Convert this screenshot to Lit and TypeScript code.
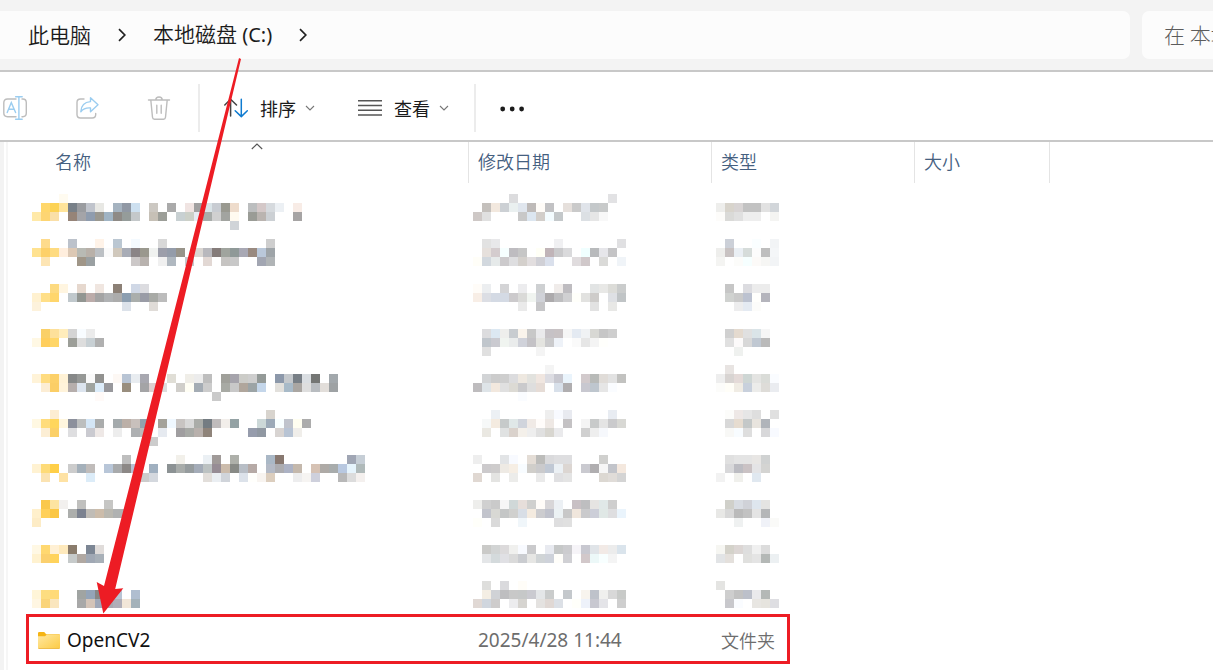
import { LitElement, html, svg, css } from "lit";
import { customElement, property } from "lit/decorators.js";

const BLOCK = 9;

/** One line of blocks: colours separated by blanks, "." skips a block, "n:" jumps to block n. */
type Line = string;

interface HiddenRow {
  name: Line[];
  date: Line[];
  type: Line[];
  lines: number;
}

const HIDDEN_ROWS: HiddenRow[] = [
  {
    lines: 5,
    name: [
      "3:fffbf0",
      "1:ffd76b fcd254 ffe49a 788088 9a9ca0 c0c4cc e8e8e4 . a5b3c0 9098a4 cde0f0 . ccc8c2 . aaaaaa . f0e4e2 a0a0a0 dae4e8 c8ccd2 999990 eedccc . bcbebf d4c8c8 d6dade ecf0f4 . f8ece6",
      "ffe9a8 fdd573 fadfa8 . 968478 a4a4a8 8f9cae 9a9890 a0b4c4 8e8a86 959c9a c4c8ca . c6c0b6 9c9e98 . c8d0d2 ccd0c8 e8ecf4 a8acaa d0d0d0 a2a4a0 fffaf0 . 9a9c96 bab4b0 ccd0d4 . . a6a4a4",
      "22:d0d4d8",
    ],
    date: [
      "4:dcdcde 15:e2e2e4",
      "1:c4c0bc f2e8de ccd0d4 eaf0f0 e0e6ee bebab8 fffcf8 c2c2c4 . e6e0dc cacaca e0e4ea c4c8ca c8caca",
      "cec8c6 e0e0e0 5:c8c8c8 dce6f0 d2ceca f4fcff c4c8ca 12:dce0e4 e6e6e6 f8f8f8",
    ],
    type: [
      "",
      "eeeeec d8d4cc d8d4d4 c2c2c2 c2c2c2 e2e2e2 d2d6da",
      "fdfcfa dadad8 e0e0e0 eeeeee eeeeee . f4f4f2",
    ],
  },
  {
    lines: 5,
    name: [
      "1:fedb8c 4:bcc2cb 7:fff3e8 9:bbc7d2 11:f4faff 14:d8d8d8 26:cecece",
      "ffe290 fdd068 fedb80 ffeedd dcc8b4 b8bab4 b8b0a8 bcc0c4 fafafa d0c8bc a8acb6 8a8486 9a988e f0f2f0 9c9eaa 949caa 98948a . dad6d2 b8b8bd 857c7a a0a49e 8f9998 a8a8b4 998a80 bac8da 9ea4a8",
      "1:fde5b4 5:a09688 9aa0a2 11:ccc8c8 b8b2ae . f0f0f0 b0b8c0 . c8c8cc . e2d8d4 . c6c4c2 c8c8c8 . . a2a6b2 b0b4b6",
    ],
    date: [
      "1:e2e2e2 e8e8ea 9:f0f0f2 16:e0e0e2",
      "1:e6e0dc d4ccce f6ffff bebcc0 c6c6c6 . fffff6 c0b4b8 cacacc dadadc . f0ffff b8babc e6e6ea c4c4c6",
      "fffef8 d2d8de e6eaea cccacc dedee0 d4d0cc e2dedf d0d0d6 dae0ec . . e0dcde d0c8ca . dadad8 . f0f4f8",
    ],
    type: [
      "1:ccd0d8 4:fafeff 6:f2f4f6",
      "eeeeec c8c2c2 eaeff4 d6dcda fcfcfc bebebe f4f6f8",
      "f4f4f2 . fcfcfa f6ffff fcfaf8 f6f6f4 f2f4f6",
    ],
  },
  {
    lines: 5,
    name: [
      "2:fdda80 fff5e0 . e6d8ce . f0e6e0 . 8c8076 . d0d8e6 dcdce0",
      "fff1d0 ffdf88 ffd66c . c0c8cc 929692 bcacaa a4a4a4 b0b2b4 acacac 8c9eb0 aaaeac 9a9ca6 a8aaa6 bcbcbc",
      "fdf2dc 10:dce2ea 13:e0dcd8",
    ],
    date: [
      "fffcf8 eceef0 . d4d4d6 . ececee . ced0d2 . f0ecea bebcc0 13:e2e4e4 e8e8e6 dcdcd8 cacccc",
      "f8eee6 dcdee4 d4dae4 d4dae4 cccacc dadad8 f0f4f0 d0d2d8 acaaac bebec0 d0d0d2 fffffa e2e2e0 ceccca . dee0e4 c0c4c6",
      "5:eaeaea . c6c6c8 13:e2e2e2 . e8e8e6",
    ],
    type: [
      "1:c6c6c6 . dcdce0 ececec ececec",
      "1:d0d2d0 cacaca bcc2d0 fffffc b4b4bc",
      "2:ededee e4eaf2 fcfcfa",
    ],
  },
  {
    lines: 4,
    name: [
      "1:fad068 fde09a ffedbc d4d4d4 f8fcff ebebeb",
      "fff8e4 ffce5c ffd668 . 9c9e98 dddddd c8d0d4 b0b0b0",
    ],
    date: [
      "1:dcdcde dce8f2 eeeeec c8ccd0 faf4ec c8c8c8 eaeaec c6c2c6 c8c2c4 f6f6f6 e4eaf2 f0f2f4 d8d8d4 c6c6c6 cecece",
      "1:c0c6cc cacad0 f0f4f0 eaecec d0d2da c4c2c6 e4e4e0 cacacc eef2f8 . fafafa e6e6e6 f4f4f4 fffffc",
      "1:e0e0e0 7:f4f4f4",
    ],
    type: [
      "1:d0d0d0 e4dacf e0e0e0 dae4e8 f6f6f6",
      "1:e0e0e0 fcfafa d8d8d8 c0c8d2 bababa",
      "2:eff1ef",
    ],
  },
  {
    lines: 5,
    name: [
      "",
      "fff3d8 ffdc80 fcd068 fff2d6 868888 969896 fafafa 929290 . fdf8f4 b8c4d4 e8ecf0 a8a8b0 15:e0ded6 . f0eee8 ececec bebebe . a0a09a a6a4ac ccccc8 cecece 949a98 . 8c98aa c4c8cc 787f86 dadee2 747674 . a2a8ac",
      "1:fcedd4 fbce66 fff3da b6aeac dce4ee a0a4a0 dcecfa 98989c . 998e7e . a4a4a6 ddd0d0 dddddd . d0ceca fffef4 a4acb4 cccccc . a8aaa4 c8c8c8 b0a69c 9ca4a6 c4d6ea . e2e0dc a8bac8 aaa6a2 dedede b8bcc0 e2deda 9ea2a4",
      "7:fffaf8 20:cacaca",
    ],
    date: [
      "8:f4f4f4",
      "1:d2d4d6 cccccc cecece dcdcde eee8e0 e2e2de f0e6e0 dcdce2 c8c8d0 eaf4fc . d2cacc b8bab8 e0dcd8 e2e2e2 c2c2c0",
      "bebcbe dee4e8 f2e8de e0e0e0 dcdad4 cacacc dedede e6dcd6 . d8e0ea b0aeb0 . c8c8d0 bec6ce e6e6e6 fafcff",
      "5:fafcff",
    ],
    type: [
      "1:e8e4e2",
      "eeeeee d8d4d2 e4dad8 ced6d4 e4e4e2 dadcd8 fafcff",
      "fcfcfa fffef8 f0ece4 c8d0dc ececea dedcd8 eaecf0",
    ],
  },
  {
    lines: 5,
    name: [
      "2:fdedd2 26:d8d4ce",
      "fff8e2 ffdc7c ffd65c fff6de 8c909c bcbebe d4e6f6 aaacac . a4aaac bcb0a8 c8c0bc 92a2ae . a4a29a f0f8ff c8c4c2 d8d8d8 aaaca8 747c82 c0bcbc f2eeea 94a2a4 . . ccd8d8 9caab8 f8ffff c0c4cc fffef0 acacac",
      "1:fceed4 fbd068 . dedee0 . cacad0 eee8e6 . ededed . aeb0b2 bbbbbb . e6eaf0 . a09ea0 a8aaa6 b8b0ac 8f847a 24:969cac 9098a2 . d8d4d2 b8c4d4 f0eeea",
      "13:cccccc",
    ],
    date: [
      "2:ecf0f4 8:eeeeee f8faff e8eaf0 15:e8ecf2",
      "1:f6f8f8 f4ebe0 c6caca e0e8e8 d0d4dc f0eae6 fffcfa eee8e4 . c4c2c4 . f4f4f4 c8caca e4e4e4 cacacc d8d8d4",
      "1:eae8e2 . e0e2e2 dad2cc f4f0ea eeeeee e0e0e0 d8d6d0 eaeaec 12:d0d0d0 eeeeee f6f8fc",
    ],
    type: [
      "1:fcfcfa eee8e6 e6e6e6 dedede . e0e0e0",
      "1:d8d8d8 e6dcd0 c4c8c8 e8e4de b0b4ba",
      "1:f8f8f6 f8fcff dedede . d8d8da f8faff",
    ],
  },
  {
    lines: 5,
    name: [
      "10:bebebe 16:f2f0ea 19:ebf0f4 a09a98 . aeb0aa 26:aab8c6 887870 35:a0a6b4 c6ced6",
      "fff2d2 fedb78 ffcf48 . cccccc a4b0ba c0bcba . b8c6d8 a8aaac 8c8886 b8c0d4 . a0b0c0 . 8c9294 a8acaa 969c9e a4acb8 bcc2c2 968c94 ccbcac 888a86 b8bec6 b6aaa6 . b4bac6 acacb0 acb2c4 c4b8ac . d6c2b4 aeaaa6 a8acac b8c8e0 e6f4fc b0baba",
      "1:fbe3b2 . fee2a4 6:dcecf8 12:cccccc d4d8de 19:e2deda eaeef2 d0d4da . dce2ea fffffc f8f4f0 dccebe . . ededee f6f4f2 ced0dc . . b8b8b8 dcdcdc f4f0ee",
    ],
    date: [
      "eeeeee . . e2e4e6 f8faff . e4ddd6 bcbcba dadadc dedee0 dedee0 14:d0d0ce",
      "1:cccacc cecccc eeeae4 f6eee4 f8fcff d0ceca cacacc c0c8d4 ebf0f4 dcd6d2 . cacad0 b0aeb0 f6f6f6 c2c4ca f4e8de",
      "e0d8d2 . e4e4e2 . ececea 7:eaeaea . e0e0e2 e4e4e4 14:dcd8d2 e0dcd8 d4d4d4",
    ],
    type: [
      "1:e0e0e0 e4e4e4 e4e4e4 e8e6e4 d0d2d2",
      "1:d8d8da bcbcc2 cac2c4 e4e4e6 d4d4d2",
      "f2f2f2 . f0f0ec . e0e8f0",
    ],
  },
  {
    lines: 5,
    name: [
      "1:fac84c fde4a0 f2f0ee . c0c0be . . c6c6c4",
      "fff0cc ffd05a fbc744 . acaeac 7c8290 c0bcb6 ccbcaa bab8b0 b0b2b2 b0b2b2",
      "fdecc6",
    ],
    date: [
      "eeeeec d0d0d0 cacaca f6f6f6 d0d8d8 e6deda d0d0ce fffcf8 d8d6d8 ecf0f4 . c8c0c4 bebec0 e6e4e2 e0e8e8 cecece",
      "1:c2c4cc d8d8d4 c4c6c6 d0d0ce d8dee6 f4ebe0 cccccf c0c2cc ecf2f4 c8c8c8 f0e6dc cacacc ccced8 e0e8e6 dedee0 eaf4fc",
      "fffffa . dadada . . f0f6fa 9:dededf e0e0e0",
    ],
    type: [
      "1:d0d0ca d8dce2 d0d2d8 dee6ee e4e4e2",
      "e8e8e6 d8d8d8 bababa c2c2c2 e4e4e4 b4b6b8",
      "2:eff1f1 5:f0f2f8 fafaf8",
    ],
  },
  {
    lines: 4,
    name: [
      "fff8e4 ffd870 fff0d4 fee9bc 8a7c6c . 7c8694 e0dcda",
      "fff2d0 fbd06e ffd35c . c6caca b0a8a2 a0a8b4 a8b0b8",
    ],
    date: [
      "1:cacac8 d2d4d4 dcdadb f0f0ee f8faff cacacc . e8eaf0 c6c8c8 cccccf f6f4f8 c8c8d0 e0e4e8 f2eae6 ececec dae4ec",
      "1:e4e6e8 d4dadc e0e0e4 dadada caccd0 e6e6e4 d0d4d6 ced2da fffefa d0d0d4 . d2c8ca ecf8f8 f8ffff f4f4f4",
    ],
    type: [
      "f6f6f2 d4d2ca dcd6d4 dedede f0f0f0 dcdcdc",
      "e2e4e6 e4e0dc . e0e0de e4e4e4 b4b8b6 ecf0f2",
    ],
  },
  {
    lines: 4,
    name: [
      "",
      "fff5d8 fddd80 ffda78 . . a0a4a2 94a4b8 888684 9a9ca0 b8c4d4 . b0bed0",
      "fff6e2 fad478 fae6be . . a8a8a8 d4c4b8 a0a8b8 a8a8b0 b0aeb8 f2e6d8 a4b2ba",
    ],
    date: [
      "1:dededc . dadadd . fffdf8",
      "1:f4eee4 d0d2d6 bebec0 c8c8c8 c6c8c8 cacad0 e4e6e8 cacccc . c4c8cc . f8f4ee bec2ca f0f0ee d8d8d8 c8cac8",
      "e0d8d4 d0d6de cecccc . ececee d6d4d0 . e4e2e0 e0d8d4 dce0e6 . fffffa eef2fa c8c8d0 e4e4e8 . cecece",
    ],
    type: [
      "e4e4e2",
      "1:cecece c2c2c2 bcc0ca eaeaec b4b8b6",
      "1:c8c8cc fafcff . e8e6e2 e6e4de dedee2",
    ],
  },
];

/** Text made unreadable by coarse blocks. */
@customElement("mosaic-text")
export class MosaicText extends LitElement {
  @property({ attribute: false }) lines: Line[] = [];
  @property({ type: Number }) rows = 5;

  static styles = css`
    :host {
      display: block;
    }
    .blocks {
      display: block;
    }
  `;

  private blocks() {
    const out: { x: number; y: number; fill: string }[] = [];
    this.lines.forEach((line, y) => {
      let x = 0;
      for (let token of line.split(" ")) {
        if (!token) continue;
        const jump = token.indexOf(":");
        if (jump > 0) {
          x = Number(token.slice(0, jump));
          token = token.slice(jump + 1);
        }
        if (token !== ".") out.push({ x, y, fill: "#" + token });
        x += 1;
      }
    });
    return out;
  }

  render() {
    const blocks = this.blocks();
    const columns = Math.max(1, ...blocks.map((b) => b.x + 1));
    return html`<svg
      class="blocks"
      width=${columns * BLOCK}
      height=${this.rows * BLOCK}
      viewBox="0 0 ${columns} ${this.rows}"
      shape-rendering="crispEdges"
      aria-hidden="true"
    >
      ${blocks.map((b) => svg`<rect x=${b.x} y=${b.y} width="1" height="1" fill=${b.fill}></rect>`)}
    </svg>`;
  }
}

const crumbArrow = html`<svg width="8" height="14" viewBox="0 0 8 14" fill="none" stroke="#222" stroke-width="1.7" aria-hidden="true">
  <path d="M1 1.2 6.8 7 1 12.8" />
</svg>`;

const dropArrow = html`<svg width="12" height="8" viewBox="0 0 12 8" fill="none" stroke="#777" stroke-width="1.1" aria-hidden="true">
  <path d="M2 2l4 4 4-4" />
</svg>`;

@customElement("app-root")
export class AppRoot extends LitElement {
  static styles = css`
    :host {
      display: block;
      position: relative;
      min-height: 100vh;
      overflow: hidden;
      background: #fff;
      color: #1b1b1b;
      font-family: "Noto Sans", "Noto Sans CJK SC", sans-serif;
      font-size: 18px;
      line-height: 24px;
    }
    * {
      box-sizing: border-box;
    }
    button,
    input {
      font: inherit;
      color: inherit;
      border: 0;
      margin: 0;
      padding: 0;
      background: none;
    }
    svg {
      display: block;
      flex: none;
    }
    .top {
      display: flex;
      gap: 12px;
      padding: 11px 0;
      background: #f3f3f3;
      border-bottom: 2px solid #c8c8c8;
      font-family: "Noto Sans CJK SC", sans-serif;
      font-size: 21px;
    }
    .address {
      flex: 1;
      min-width: 0;
      display: flex;
      align-items: center;
      gap: 27px;
      height: 48px;
      padding-left: 28px;
      background: #fcfcfc;
      border-radius: 0 7px 7px 0;
    }
    .crumb {
      padding-bottom: 2px;
      white-space: nowrap;
      font-weight: 350;
    }
    .latin {
      font-family: "Noto Sans", sans-serif;
      font-size: 20px;
      font-weight: 400;
    }
    .search {
      flex: 0 0 71px;
      width: 71px;
      height: 48px;
      padding: 0 0 2px 22px;
      background: #fcfcfc;
      border-radius: 7px 0 0 7px;
      font-weight: 300;
    }
    .search::placeholder {
      color: #5c5c5c;
      opacity: 1;
    }
    .tools {
      display: flex;
      align-items: center;
      gap: 24px;
      height: 70px;
      padding: 4px 0 0 3px;
      border-bottom: 2px solid #c8c8c8;
    }
    .group {
      display: flex;
      align-items: center;
      gap: 42px;
    }
    .group.icons {
      gap: 48px;
      padding-right: 3px;
    }
    .tool {
      display: flex;
      align-items: center;
      white-space: nowrap;
    }
    .word {
      padding: 0 8px 0 12px;
      font-family: "Noto Sans CJK SC", sans-serif;
    }
    .bar {
      width: 2px;
      height: 48px;
      background: #ececec;
    }
    .files {
      display: flex;
      align-items: flex-start;
      min-height: calc(100vh - 142px);
      border-left: 4px solid #f3f3f3;
    }
    .edge {
      align-self: stretch;
      width: 4px;
      border-right: 2px solid #f6f6f6;
    }
    .list {
      table-layout: fixed;
      width: 1042px;
      border-collapse: collapse;
    }
    .c-name {
      width: 461px;
    }
    .c-date {
      width: 243px;
    }
    .c-type {
      width: 203px;
    }
    .c-size {
      width: 135px;
    }
    th {
      position: relative;
      padding: 0 0 11px;
      text-align: left;
      font-weight: 350;
      color: #45607f;
      font-family: "Noto Sans CJK SC", sans-serif;
    }
    .head {
      display: block;
      width: 100%;
      height: 41px;
      padding: 0 0 3px 9px;
      text-align: left;
      border-right: 1px solid #e4e4e4;
    }
    .head.first {
      padding-left: 47px;
    }
    .caret {
      position: absolute;
      top: 0;
      left: 243px;
    }
    td {
      padding: 0 0 0 4px;
      vertical-align: top;
    }
    td:first-child {
      padding-left: 24px;
    }
    .entry td {
      height: 46px;
      padding-left: 9px;
      vertical-align: middle;
      font-size: 19px;
      color: #6d6d6d;
    }
    .entry td:first-child {
      padding-left: 29px;
      color: #111;
    }
    .entry .kind {
      font-family: "Noto Sans CJK SC", sans-serif;
      font-size: 18px;
      font-weight: 350;
    }
    .file {
      display: flex;
      align-items: center;
      gap: 6px;
      color: inherit;
      text-decoration: none;
    }
    .marks {
      position: absolute;
      top: 0;
      left: 0;
      pointer-events: none;
    }
  `;

  render() {
    return html`
      <header class="top">
        <nav class="address" aria-label="地址">
          <button class="crumb">此电脑</button>
          ${crumbArrow}
          <button class="crumb">本地磁盘<span class="latin"> (C:)</span></button>
          ${crumbArrow}
        </nav>
        <input class="search" type="text" aria-label="搜索" placeholder="在 本地磁盘 (C:) 中搜索" />
      </header>

      <div class="tools" role="toolbar">
        <div class="group icons">
          <button class="tool" aria-label="重命名">
            <svg width="24" height="24" viewBox="0 0 24 24" fill="none" stroke-width="1.4" stroke-linecap="round">
              <path stroke="#bdbdbd" d="M13 3H4.500Q.8 3 .8 6.700v10.300Q.8 20.700 4.500 20.700H13M19 3h.8Q23.300 3 23.300 6.700v10.300q0 3.700-3.500 3.700H19" />
              <path stroke="#9bcdf0" d="M12.600.8h6.600M15.900.8v22.400M12.600 23.200h6.600" />
              <path stroke="#9bcdf0" d="M4.200 16.500 8.300 6.600l4.300 9.900M5.700 13.300h5.400" />
            </svg>
          </button>
          <button class="tool" aria-label="共享">
            <svg width="24" height="24" viewBox="0 0 24 24" fill="none" stroke-width="1.4" stroke-linecap="round" stroke-linejoin="round">
              <path stroke="#bdbdbd" d="M9 3H5.500Q2 3 2 6.500v12Q2 22 5.500 22h11.700q3.500 0 3.500-3.500V17.500" />
              <path stroke="#9bcdf0" d="M15.500 1.700 23 8.800l-7.500 7v-3.900c-4-.3-7.300.7-9.700 3.800.3-5.800 3.400-9.600 9.700-10.100z" />
            </svg>
          </button>
          <button class="tool" aria-label="删除">
            <svg width="24" height="24" viewBox="0 0 24 24" fill="none" stroke="#bdbdbd" stroke-width="1.4" stroke-linecap="round" stroke-linejoin="round">
              <path d="M1.500 4h21M8.800 4c0-4 6.400-4 6.400 0M3.800 4l1.700 17.300q.2 1.900 2 1.900h9q1.800 0 2-1.900L20.200 4M9.800 9.300v8M14.200 9.300v8" />
            </svg>
          </button>
        </div>
        <div class="bar"></div>
        <div class="group">
          <button class="tool">
            <svg width="24" height="24" viewBox="0 0 24 24" fill="none" stroke-width="1.5" stroke-linecap="round" stroke-linejoin="round" aria-hidden="true">
              <path stroke="#444" d="M6.600 20V3.200M.8 9l5.800-5.800L12.500 9" />
              <path stroke="#0f7bd0" d="M17.300 3.200V20.500M11.200 14.700l6.100 5.900 6-5.900" />
            </svg>
            <span class="word">排序</span>
            ${dropArrow}
          </button>
          <button class="tool">
            <svg width="24" height="24" viewBox="0 0 24 24" stroke="#555" stroke-width="1.500" aria-hidden="true">
              <path d="M0 4.800h24M0 9.500h24M0 14.300h24M0 19h24" />
            </svg>
            <span class="word">查看</span>
            ${dropArrow}
          </button>
        </div>
        <div class="bar"></div>
        <button class="tool" aria-label="更多">
          <svg width="25" height="24" viewBox="0 0 25 24" fill="#1b1b1b">
            <circle cx="2.700" cy="13" r="2.400" />
            <circle cx="12.200" cy="13" r="2.400" />
            <circle cx="21.600" cy="13" r="2.400" />
          </svg>
        </button>
      </div>

      <main class="files">
        <div class="edge"></div>
        <table class="list">
          <colgroup>
            <col class="c-name" />
            <col class="c-date" />
            <col class="c-type" />
            <col class="c-size" />
          </colgroup>
          <thead>
            <tr>
              <th scope="col">
                <button class="head first">名称</button>
                <svg class="caret" width="12" height="8" viewBox="0 0 12 8" fill="none" stroke="#555" stroke-width="1.1" aria-hidden="true">
                  <path d="M.8 7 6 2l5.200 5" />
                </svg>
              </th>
              <th scope="col"><button class="head">修改日期</button></th>
              <th scope="col"><button class="head">类型</button></th>
              <th scope="col"><button class="head">大小</button></th>
            </tr>
          </thead>
          <tbody>
            ${HIDDEN_ROWS.map(
              (row) => html`<tr>
                <td><mosaic-text .lines=${row.name} .rows=${row.lines}></mosaic-text></td>
                <td><mosaic-text .lines=${row.date} .rows=${row.lines}></mosaic-text></td>
                <td><mosaic-text .lines=${row.type} .rows=${row.lines}></mosaic-text></td>
                <td></td>
              </tr>`
            )}
            <tr class="entry">
              <td>
                <a class="file" href="#OpenCV2">
                  <svg width="24" height="20" viewBox="0 0 24 20" aria-hidden="true">
                    <defs>
                      <linearGradient id="paper" x1="0" y1="0" x2="1" y2="1">
                        <stop offset="0" stop-color="#ffe8a2" />
                        <stop offset="1" stop-color="#fccb45" />
                      </linearGradient>
                    </defs>
                    <path fill="#f5b414" d="M1 3.200Q1 2 2.200 2h5l2 2.200H22q1 0 1 1V9H1z" />
                    <path fill="url(#paper)" d="M1 6.200h7L10 4.500h12q1 0 1 1V17.500q0 1-1 1H2q-1 0-1-1z" />
                    <path fill="#e9af2c" d="M1 17.600q0 1.200 1 1.200h20q1 0 1-1.200-.3.500-1 .5H2q-.7 0-1-.5z" />
                  </svg>
                  OpenCV2
                </a>
              </td>
              <td>2025/4/28 11:44</td>
              <td class="kind">文件夹</td>
              <td></td>
            </tr>
          </tbody>
        </table>
      </main>

      <svg class="marks" width="800" height="670" viewBox="0 0 800 670" aria-hidden="true">
        <rect x="27.500" y="615.500" width="761" height="47" fill="none" stroke="#ed1c24" stroke-width="3" />
        <path fill="#ed1c24" d="M239 58 241 59 115.200 589 123.300 588.200 103.300 613.500 96.700 582 104 586z" />
      </svg>
    `;
  }
}
